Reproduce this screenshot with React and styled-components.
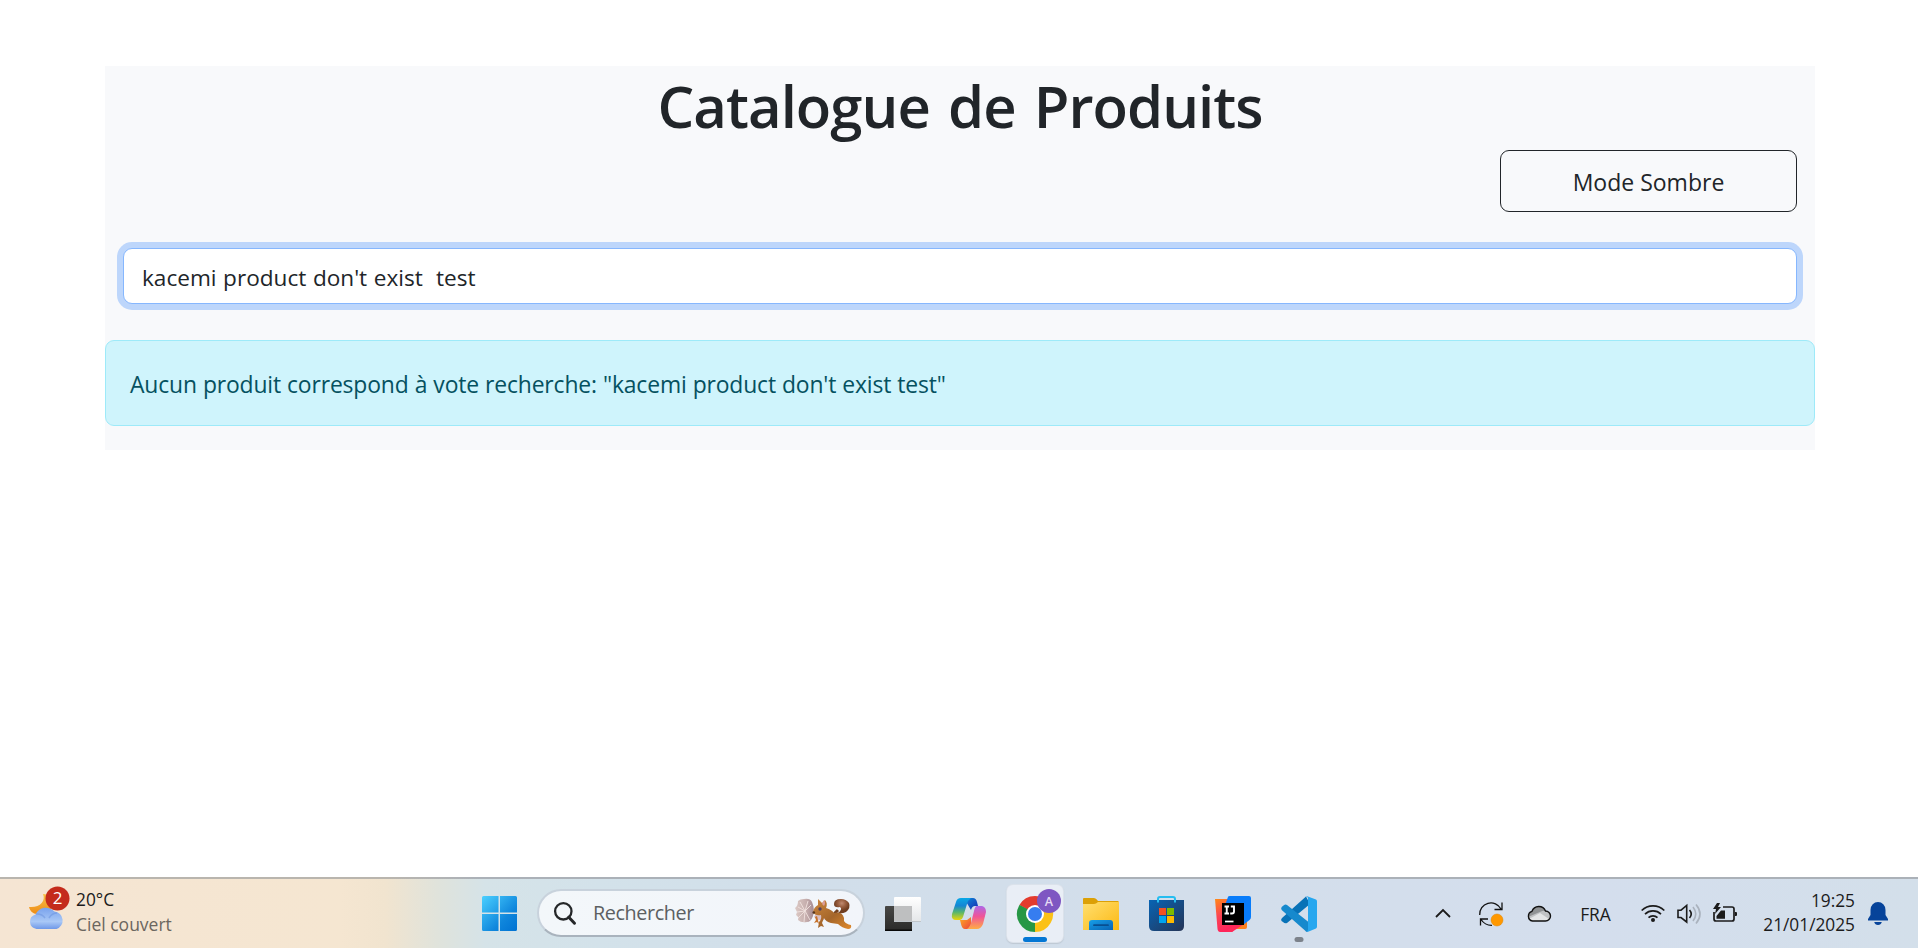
import React, { useState } from "react";
import styled, { createGlobalStyle } from "styled-components";

const GlobalStyle = createGlobalStyle`
  *, *::before, *::after { box-sizing: border-box; }
  body { margin: 0; background: #fff; color: #212529; font-family: "Open Sans", "Noto Sans", sans-serif; }
  svg { display: block; overflow: visible; flex: none; }
`;

const Screen = styled.div`
  display: flex;
  flex-direction: column;
  height: 948px;
  overflow: hidden;
`;
const Page = styled.main`
  flex: 1;
  padding: 66px 103px 0 105px;
`;
const Catalogue = styled.section`
  height: 384px;
  background: #f8f9fb;
  display: flex;
  flex-direction: column;
`;
const Title = styled.h1`
  margin: 0;
  height: 84px;
  line-height: 79px;
  font-size: 58px;
  font-weight: 600;
  letter-spacing: -0.95px;
  word-spacing: 4px;
  text-align: center;
  white-space: nowrap;
`;
const Actions = styled.div`
  display: flex;
  justify-content: flex-end;
  padding: 0 18px;
`;
const ModeButton = styled.button`
  width: 297px;
  height: 62px;
  padding: 1px 0 0;
  border: 1px solid #212529;
  border-radius: 9px;
  background: transparent;
  color: #212529;
  font: 400 23px "Open Sans", sans-serif;
`;
const SearchRow = styled.div`
  padding: 36px 18px;
`;
const SearchInput = styled.input`
  display: block;
  width: 100%;
  height: 56px;
  padding: 3px 18px 0;
  border: 1px solid #86b7fe;
  border-radius: 9px;
  outline: 0;
  box-shadow: 0 0 0 6px #bdd6fb;
  background: #fff;
  color: #212529;
  font: 400 22.6px "Open Sans", sans-serif;
  word-spacing: 0.7px;
`;
const Alert = styled.div`
  display: flex;
  align-items: center;
  height: 86px;
  padding: 3px 24px 0;
  border: 1px solid #9eeaf9;
  border-radius: 9px;
  background: #cff4fc;
  color: #055160;
  font-size: 22.9px;
  letter-spacing: -0.15px;
  word-spacing: 0.3px;
  white-space: nowrap;
`;

const Bar = styled.footer`
  display: flex;
  height: 71px;
  border-top: 2px solid #abb1b9;
  border-image: linear-gradient(90deg, #b9b5ae 0, #b9b5ae 390px, #abb1b8 480px) 1;
  background: linear-gradient(90deg, #f5e5d3 0, #f5e6d1 340px, #f1e4cf 385px, #dfe3dc 440px, #d5e3e8 485px, #d3e2ea 600px, #d1deea 800px, #d3deeb 1200px, #d4deed 1600px, #d3dfea 1918px);
`;
const Weather = styled.div`
  display: flex;
  gap: 10px;
  width: 466px;
  padding: 6px 0 0 28px;
`;
const WeatherText = styled.div`
  display: flex;
  flex-direction: column;
  padding-top: 3px;
  line-height: 24px;
`;
const Line = styled.span`
  display: block;
  font-size: ${(p) => p.$size || 17.3}px;
  letter-spacing: ${(p) => p.$spacing || 0}px;
  color: ${(p) => (p.$muted ? "#6b665f" : "#1b1b1b")};
  white-space: nowrap;
`;
const Apps = styled.div`
  display: flex;
  align-items: center;
`;
const AppCell = styled.div`
  position: relative;
  display: flex;
  align-items: center;
  justify-content: center;
  width: 66px;
  height: 69px;
`;
const ActiveTile = styled.div`
  display: flex;
  align-items: center;
  justify-content: center;
  width: 56px;
  height: 57px;
  border-radius: 6px;
  background: #e9eef6;
  box-shadow: 0 0 0 1px #dbe2eb, 0 1px 1px 1px #bec8d3;
`;
const Indicator = styled.span`
  position: absolute;
  left: 50%;
  bottom: 6px;
  width: ${(p) => (p.$active ? 24 : 9)}px;
  height: 5px;
  border-radius: 3px;
  transform: translateX(-50%);
  background: ${(p) => (p.$active ? "#0477d4" : "#7c828b")};
`;
const TaskSearch = styled.div`
  display: flex;
  align-items: center;
  width: 328px;
  height: 48px;
  margin: 0 5px 1px;
  padding: 0 11px 0 15px;
  border: 2px solid #c8d2dc;
  border-bottom-color: #a9b3bd;
  border-radius: 24px;
  background: linear-gradient(90deg, #f3f7fa, #f2f5fa);
`;
const TaskSearchLabel = styled.span`
  flex: 1;
  padding: 0 0 1px 17px;
  font-size: 19.8px;
  letter-spacing: -0.4px;
  color: #5c5f62;
`;
const Tray = styled.div`
  display: flex;
  align-items: center;
  margin-left: auto;
  padding-right: 17px;
`;
const TrayCell = styled.div`
  display: flex;
  align-items: center;
  justify-content: center;
  width: ${(p) => p.$w || 48}px;
  padding-right: ${(p) => p.$end || 0}px;
  font-size: 17.4px;
  color: #1b1b1b;
`;
const Clock = styled.div`
  width: 112px;
  text-align: right;
  line-height: 24px;
  padding-bottom: 1px;
`;

const WeatherIcon = () => (
  <svg width="38" height="46" viewBox="28 885 38 46">
    <defs>
      <linearGradient id="moon" x1="0" y1="0" x2="0" y2="1"><stop stopColor="#f8c34a" /><stop offset="1" stopColor="#ee8b15" /></linearGradient>
      <linearGradient id="cloud" x1="0" y1="0" x2="0" y2="1"><stop stopColor="#79a2ed" /><stop offset=".65" stopColor="#a9c8f6" /><stop offset="1" stopColor="#6f98e8" /></linearGradient>
    </defs>
    <path d="M43 894c3 7-3 14-14 13c1 4 4 7 8 7h14v-17c-2-2-5-3-8-3z" fill="url(#moon)" />
    <path d="M38.500 929H36.500a8 7.500 0 0 1-1-14.500a11.500 11.500 0 0 1 19-3a9 9 0 0 1 2 17.500z" fill="url(#cloud)" />
    <path d="M36 914q6-.5 9 4M49 918q3-5 8-5" fill="none" stroke="#6b93df" strokeWidth="1.500" opacity=".55" />
    <circle cx="57.500" cy="898.500" r="12" fill="#c42b1c" />
    <text x="57.500" y="904" textAnchor="middle" fontFamily="Open Sans, sans-serif" fontSize="17" fill="#fff">2</text>
  </svg>
);

const StartIcon = () => (
  <svg width="35" height="35" viewBox="0 0 35 35">
    <defs><linearGradient id="win" gradientUnits="userSpaceOnUse" x1="0" y1="0" x2="35" y2="35"><stop stopColor="#4bd0ff" /><stop offset=".65" stopColor="#0f86dc" /><stop offset="1" stopColor="#0072d2" /></linearGradient></defs>
    <path d="M1.500 0H16.500V16.500H0V1.500Q0 0 1.500 0zM18 0H33.500Q35 0 35 1.500V16.500H18zM0 18H16.500V35H1.500Q0 35 0 33.500zM18 18H35V33.500Q35 35 33.500 35H18z" fill="url(#win)" />
  </svg>
);

const SearchIcon = () => (
  <svg width="22" height="23" viewBox="0 0 22 23" fill="none" stroke="#252729">
    <circle cx="9.300" cy="9.300" r="8.200" strokeWidth="2.300" /><path d="M14.800 15.200l5.700 6" strokeWidth="3" strokeLinecap="round" />
  </svg>
);

const SquirrelIcon = () => (
  <svg width="57" height="31" viewBox="796 898 57 31">
    <defs>
      <radialGradient id="tail" cx=".5" cy=".3"><stop stopColor="#c08a70" /><stop offset=".5" stopColor="#9a5f40" /><stop offset="1" stopColor="#6f3d20" /></radialGradient>
      <linearGradient id="fur" x1="0" y1="0" x2="1" y2="1"><stop stopColor="#cd873f" /><stop offset=".55" stopColor="#a5662a" /><stop offset="1" stopColor="#e08a2d" /></linearGradient>
      <linearGradient id="shell" x1="0" y1="0" x2="1" y2="0"><stop stopColor="#dccac6" /><stop offset=".6" stopColor="#c6aead" /><stop offset="1" stopColor="#a48a92" /></linearGradient>
    </defs>
    <path d="M799 901q2-2 6-2q6-1 8 3q3 7 1 14q-2 6-6 6q-6 1-9-2q1-3-2-5l1-3l-2-4q3-2 3-7z" fill="url(#shell)" />
    <path d="M801 902l5 9l3-10M799 907l7 4l-8 1M799 918l7-7l-1 11M806 911l6-6M806 911l5 9" stroke="#f1e2df" strokeWidth=".9" fill="none" />
    <path d="M815 917q7 6 11 2l1-7h-9z" fill="#d8bec5" />
    <path d="M839 918q-6-1-3-5l3-3" stroke="#74421f" strokeWidth="3" fill="none" />
    <path d="M839 913q4 1 8-1q5-4 3-9q-3-4-8-4q-7 0-7 5q0 4 6 3q3 2-2 6z" fill="url(#tail)" />
    <path d="M814 912q1-5 5-7l0-6l4 4l3-3q3 3 1 8q6 2 8 5q8-2 10 5l0 3q2 3 7 4q1 4-3 4q-6-1-10-5l-7-1q-5-1-7-5l-2 5l2 4l-3-1l-3 2l1-6q3-3 2-7q-6 1-8-3z" fill="url(#fur)" />
    <path d="M816 917l1 3l-2 3l3-1l2 2l-1-4l-1-4z" fill="#c7722b" />
    <path d="M825 900q2 3 0 6l-2-2z" fill="#db9d9b" /><circle cx="821" cy="909" r="1.700" fill="#50405d" />
    <circle cx="814.800" cy="912.500" r="1.300" fill="#54351f" />
  </svg>
);

const TaskViewIcon = () => (
  <svg width="36" height="34" viewBox="0 0 36 34">
    <defs><linearGradient id="tvd" x1="0" y1="0" x2="0" y2="1"><stop stopColor="#474745" /><stop offset="1" stopColor="#2a2a29" /></linearGradient><linearGradient id="tvw" x1="0" y1="0" x2="0" y2="1"><stop stopColor="#fff" /><stop offset="1" stopColor="#e4e6e8" /></linearGradient></defs>
    <rect y="9" width="27" height="25" rx="1" fill="url(#tvd)" /><rect y="32.500" width="27" height="1.500" fill="#080808" />
    <rect x="9" width="27" height="25" rx="1" fill="url(#tvw)" />
    <path d="M9 9H27V25H9z" fill="#bebfc0" /><path d="M9 24.500H36" stroke="#bfc5ca" />
  </svg>
);

const CopilotIcon = () => (
  <svg width="34" height="31" viewBox="0 0 34 31">
    <defs>
      <linearGradient id="ca" x1="0" y1="0" x2="0" y2="1"><stop stopColor="#08a8e7" /><stop offset=".35" stopColor="#1386d4" /><stop offset=".65" stopColor="#58b66d" /><stop offset="1" stopColor="#ead50b" /></linearGradient>
      <linearGradient id="cb" x1="0" y1="0" x2="0" y2="1"><stop stopColor="#ad68e7" /><stop offset=".45" stopColor="#f05498" /><stop offset="1" stopColor="#ffac45" /></linearGradient>
      <linearGradient id="cc" x1="0" y1="0" x2="1" y2="1"><stop stopColor="#0d8edc" /><stop offset="1" stopColor="#1829b0" /></linearGradient>
      <linearGradient id="cd" x1="0" y1="0" x2="1" y2="1"><stop stopColor="#ffad21" /><stop offset="1" stopColor="#ec443b" /></linearGradient>
    </defs>
    <path d="M12 0h9q3 0 4 4l1 4h-3q-3 0-4 4l-3-5z" fill="url(#cc)" />
    <path d="M8 22h7l4-3v8l-3 4h-3q-3 0-4-5z" fill="url(#cd)" />
    <path d="M9 0h10q-3 2-4 6l-4 13q-1 3-3 3H4q-5 0-4-6L4 4Q5 0 9 0z" fill="url(#ca)" />
    <path d="M25 8h5q4 1 4 6l-3 12q-2 5-6 5H15q3-2 4-6l3-12q1-5 3-5z" fill="url(#cb)" />
  </svg>
);

const ChromeIcon = () => (
  <svg width="36" height="36" viewBox="0 0 36 36">
    <path d="M18 18L2.400 9A18 18 0 0 1 33.600 9z" fill="#e33b2e" />
    <path d="M18 18L33.600 9A18 18 0 0 1 18 36z" fill="#fbc116" />
    <path d="M18 18L18 36A18 18 0 0 1 2.400 9z" fill="#269745" />
    <path d="M18 9H33.600L26 14z" fill="#e33b2e" /><path d="M25.800 22.500L18 36L18 25z" fill="#fbc116" /><path d="M2.400 9L10.200 22.500L14 15z" fill="#269745" />
    <circle cx="18" cy="18" r="9" fill="#fff" /><circle cx="18" cy="18" r="7" fill="#367df0" />
    <circle cx="32" cy="5" r="12" fill="#7e57c2" />
    <text x="32" y="9.500" textAnchor="middle" fontFamily="Open Sans, sans-serif" fontWeight="600" fontSize="12.500" fill="#e5daf4">A</text>
  </svg>
);

const FolderIcon = () => (
  <svg width="36" height="32" viewBox="0 0 36 32">
    <defs><linearGradient id="fo" x1="0" y1="0" x2="1" y2="1"><stop stopColor="#ffdf70" /><stop offset="1" stopColor="#fcb913" /></linearGradient><linearGradient id="fb" x1="0" y1="0" x2="1" y2="1"><stop stopColor="#17a0e8" /><stop offset="1" stopColor="#0863b5" /></linearGradient></defs>
    <path d="M0 1Q0 0 1 0H11Q13 0 15 3H35L36 4V10H0z" fill="#dca006" />
    <path d="M0 6H11Q13 6 15 4H36V32H0z" fill="url(#fo)" />
    <path d="M6 32V25Q6 22 9 22H27Q30 22 30 25V32z" fill="url(#fb)" /><path d="M11 27.200H25" stroke="#084f91" strokeWidth="1.800" strokeLinecap="round" />
  </svg>
);

const StoreIcon = () => (
  <svg width="36" height="35" viewBox="0 0 36 35">
    <defs><linearGradient id="st" x1="0" y1="0" x2="1" y2="1"><stop stopColor="#0864b4" /><stop offset="1" stopColor="#253456" /></linearGradient></defs>
    <path d="M0 4H35V30Q35 35 30 35H5Q0 35 0 30z" fill="url(#st)" />
    <path d="M9 6.500V3Q9 1 11 1H24Q26 1 26 3V6.500" fill="none" stroke="#25bdf0" strokeWidth="2" />
    <path d="M10 12H17V19H10z" fill="#f25022" /><path d="M18 12H25V19H18z" fill="#7fba00" /><path d="M10 20H17V27H10z" fill="#00a4ef" /><path d="M18 20H25V27H18z" fill="#ffb900" />
  </svg>
);

const IdeaIcon = () => (
  <svg width="36" height="36" viewBox="0 0 36 36">
    <defs><linearGradient id="ij" x1="0" y1="0" x2="0.4" y2="1"><stop stopColor="#ff8a17" /><stop offset=".5" stopColor="#fb4453" /><stop offset="1" stopColor="#ff225c" /></linearGradient></defs>
    <path d="M32 24V31Q32 33 30 33H20L24 24z" fill="#fc801d" />
    <path d="M0 3H14L24 28L17 36H5Q3 36 2.500 33z" fill="url(#ij)" />
    <path d="M15 0H34Q36 0 36 2V21Q36 23 34.500 24L28 29L24 26L10 9L13 1Q13 0 15 0z" fill="#087cfa" />
    <path d="M20 28H29L17 36H10z" fill="#ff2958" />
    <rect x="7" y="7" width="22" height="22" />
    <path d="M9.500 10.500H14M11.750 10.500V17.500M9.500 17.500H14M15.800 10.500H19V15.500Q19 17.500 17 17.500H15.200" fill="none" stroke="#fff" strokeWidth="1.900" />
    <path d="M10 25.500H18.500" stroke="#fff" strokeWidth="1.700" />
  </svg>
);

const CodeIcon = () => (
  <svg width="36" height="36" viewBox="0 0 36 36">
    <path d="M1 22L25 .5L29 8L6 27Q4 28 2 26L.5 25Q-.5 23.500 1 22z" fill="#0872b7" />
    <path d="M6 9L30 28L26.500 36Q25 36 24 34.500L.7 14Q-.4 12.500.7 11L2.500 9.500Q4.500 8 6 9z" fill="#1689cd" />
    <path d="M25.500 0L35 3.500Q36 4 36 5.500V30.500Q36 32 35 32.500L26.500 36Q25.500 35.500 27 34V2Q26 0 24.500 0z" fill="#27a7ef" />
  </svg>
);

const ChevronIcon = () => (
  <svg width="16" height="12" viewBox="0 0 16 12"><path d="M1 9L8 2L15 9" fill="none" stroke="#1b1b1b" strokeWidth="1.800" /></svg>
);
const SyncIcon = () => (
  <svg width="24" height="24" viewBox="0 0 24 24" fill="none" stroke="#111" strokeWidth="1.300">
    <path d="M.7 13A11.300 11.300 0 0 1 22 7M23 .5V7.500H15.500M1.500 23.500V17H9M2 17.500Q6 23.500 13 23.300" />
    <circle cx="18" cy="18" r="6" fill="#ff9800" stroke="#df8400" strokeWidth=".5" />
  </svg>
);
const CloudIcon = () => (
  <svg width="24" height="18" viewBox="0 0 24 18">
    <path d="M5.500 16A5 5 0 0 1 5 6.300A7.200 7.200 0 0 1 18.500 6A5 5 0 0 1 18.500 16z" fill="#909294" />
    <path d="M1 12L14 6.500Q17 5 20 6.500Q24 9 23 13Q22 16 18.500 16H5.500Q2 16 1 12z" fill="#c0c2c4" />
    <path d="M2 14L13 8L22 14L18.500 16H5.500z" fill="#e4e5e6" />
    <path d="M5.500 16A5 5 0 0 1 5 6.300A7.200 7.200 0 0 1 18.500 6A5 5 0 0 1 18.500 16z" fill="none" stroke="#111" strokeWidth="1.400" />
  </svg>
);
const WifiIcon = () => (
  <svg width="24" height="20" viewBox="0 0 24 20" fill="none" stroke="#1b1b1b" strokeWidth="1.700">
    <path d="M.7 6.500A16 16 0 0 1 23.300 6.500M4 10.200A11.500 11.500 0 0 1 20 10.200M7.500 13.700A6.500 6.500 0 0 1 16.500 13.700" /><circle cx="12" cy="16" r="2" fill="#1b1b1b" stroke="none" />
  </svg>
);
const SpeakerIcon = () => (
  <svg width="24" height="20" viewBox="0 0 24 20" fill="none" stroke="#1b1b1b" strokeWidth="1.600">
    <path d="M1 6.200H4L9.700 1.500V18L4 13.500H1zM12.500 6Q16 10 12.500 14" /><path d="M16 3Q21.500 10 16 17M19 .5Q27 10 19 19.500" stroke="#aab2bd" />
  </svg>
);
const BatteryIcon = () => (
  <svg width="24" height="22" viewBox="0 0 24 22">
    <path d="M10 4H19Q21 4 21 6V16Q21 18 19 18H3Q1 18 1 16V9" fill="none" stroke="#1b1b1b" strokeWidth="1.700" />
    <path d="M22 9H23Q24 9 24 10V12Q24 13 23 13H22zM3.500 15.800V13L8 7.500H12V15.800zM4 0L0 6H3L2 11L8 4H5L7 0z" fill="#1b1b1b" />
  </svg>
);
const BellIcon = () => (
  <svg width="20" height="23" viewBox="0 0 20 23"><path d="M0 18.500V17L2.500 13V8A7.500 8 0 0 1 17.500 8V13L20 17V18.500zM6.200 20H13.800Q13 23 10 23Q7 23 6.200 20z" fill="#06439a" /></svg>
);

export default function App() {
  const [query, setQuery] = useState("kacemi product don't exist  test");
  return (
    <Screen>
      <GlobalStyle />
      <Page>
        <Catalogue>
          <Title>Catalogue de Produits</Title>
          <Actions><ModeButton>Mode Sombre</ModeButton></Actions>
          <SearchRow>
            <SearchInput value={query} onChange={(e) => setQuery(e.target.value)} spellCheck={false} />
          </SearchRow>
          <Alert>Aucun produit correspond à vote recherche: "{query.replace(/\s+/g, " ")}"</Alert>
        </Catalogue>
      </Page>
      <Bar>
        <Weather>
          <WeatherIcon />
          <WeatherText>
            <Line>20°C</Line>
            <Line $muted $size={17.5}>Ciel couvert</Line>
          </WeatherText>
        </Weather>
        <Apps>
          <AppCell><StartIcon /></AppCell>
          <TaskSearch><SearchIcon /><TaskSearchLabel>Rechercher</TaskSearchLabel><SquirrelIcon /></TaskSearch>
          <AppCell><TaskViewIcon /></AppCell>
          <AppCell><CopilotIcon /></AppCell>
          <AppCell><ActiveTile><ChromeIcon /></ActiveTile><Indicator $active /></AppCell>
          <AppCell><FolderIcon /></AppCell>
          <AppCell><StoreIcon /></AppCell>
          <AppCell><IdeaIcon /></AppCell>
          <AppCell><CodeIcon /><Indicator /></AppCell>
        </Apps>
        <Tray>
          <TrayCell><ChevronIcon /></TrayCell>
          <TrayCell><SyncIcon /></TrayCell>
          <TrayCell><CloudIcon /></TrayCell>
          <TrayCell $w={72} $end={7}>FRA</TrayCell>
          <TrayCell $w={36}><WifiIcon /></TrayCell>
          <TrayCell $w={36}><SpeakerIcon /></TrayCell>
          <TrayCell $w={36}><BatteryIcon /></TrayCell>
          <Clock><Line>19:25</Line><Line>21/01/2025</Line></Clock>
          <TrayCell $w={46}><BellIcon /></TrayCell>
        </Tray>
      </Bar>
    </Screen>
  );
}
